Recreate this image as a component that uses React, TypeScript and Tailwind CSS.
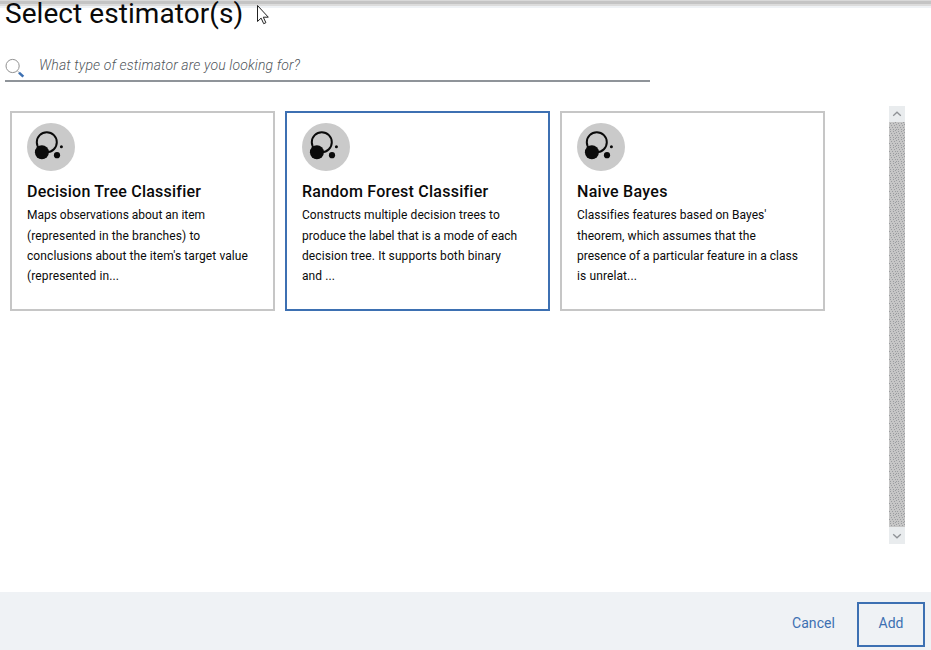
type Line = { text: string; spacing: string };
type Estimator = { title: Line; lines: Line[]; selected?: boolean };

const estimators: Estimator[] = [
  {
    title: { text: "Decision Tree Classifier", spacing: "tracking-[0.22px]" },
    lines: [
      { text: "Maps observations about an item", spacing: "tracking-[-0.01px]" },
      { text: "(represented in the branches) to", spacing: "tracking-[0.1px]" },
      { text: "conclusions about the item's target value", spacing: "tracking-[0.09px]" },
      { text: "(represented in...", spacing: "tracking-[0.13px]" },
    ],
  },
  {
    title: { text: "Random Forest Classifier", spacing: "tracking-[0.24px]" },
    lines: [
      { text: "Constructs multiple decision trees to", spacing: "tracking-[0.06px]" },
      { text: "produce the label that is a mode of each", spacing: "tracking-[0.04px]" },
      { text: "decision tree. It supports both binary", spacing: "tracking-[0.1px]" },
      { text: "and ...", spacing: "tracking-[0.09px]" },
    ],
    selected: true,
  },
  {
    title: { text: "Naive Bayes", spacing: "tracking-[0.28px]" },
    lines: [
      { text: "Classifies features based on Bayes'", spacing: "tracking-[0.03px]" },
      { text: "theorem, which assumes that the", spacing: "tracking-[0.07px]" },
      { text: "presence of a particular feature in a class", spacing: "tracking-[0.02px]" },
      { text: "is unrelat...", spacing: "tracking-[0.11px]" },
    ],
  },
];

function ClusterIcon() {
  return (
    <svg viewBox="0 0 48 48" className="size-12 shrink-0">
      <circle cx="24" cy="24" r="24" fill="#cacaca" />
      <circle cx="19.8" cy="19.2" r="10" fill="none" stroke="#0a0a0a" strokeWidth="2" />
      <circle cx="14.9" cy="29.2" r="7" fill="#0a0a0a" />
      <circle cx="30" cy="32.2" r="3.1" fill="#0a0a0a" />
      <circle cx="34.4" cy="23.8" r="1.5" fill="#0a0a0a" />
    </svg>
  );
}

function Card({ title, lines, selected }: Estimator) {
  return (
    <div
      className={`flex h-[200px] w-[265px] flex-col border-2 px-[15px] pt-2.5 ${
        selected ? "border-[#3d70b2]" : "border-[#c6c6c6]"
      }`}
    >
      <ClusterIcon />
      <h2 className={`mt-2.5 text-base leading-[21px] font-medium whitespace-nowrap ${title.spacing}`}>
        {title.text}
      </h2>
      <p className="mt-[3px] text-xs leading-5 whitespace-nowrap">
        {lines.map((line) => (
          <span key={line.text} className={`block first:mb-px ${line.spacing}`}>
            {line.text}
          </span>
        ))}
      </p>
    </div>
  );
}

function ScrollBar() {
  return (
    <div className="mt-6 flex h-[438px] w-4 flex-col">
      <div className="flex h-4 items-center justify-center bg-[#e9ecee]">
        <svg viewBox="0 0 16 16" className="size-4" fill="none" stroke="#8f9296" strokeWidth="1.3">
          <path d="M4.2 9.8 8 6.2l3.8 3.6" />
        </svg>
      </div>
      <svg className="h-[405px] w-4" shapeRendering="crispEdges">
        <defs>
          <pattern id="grain" width="8" height="8" patternUnits="userSpaceOnUse">
            <rect width="8" height="8" fill="#c6c6c6" />
            <path
              d="M1 1h1v1h-1zM4 1h1v1h-1zM6 0h1v1h-1zM2 3h1v1h-1zM5 3h1v1h-1zM7 2h1v1h-1zM0 5h1v1h-1zM3 5h1v1h-1zM6 5h1v1h-1zM1 7h1v1h-1zM4 7h1v1h-1zM7 7h1v1h-1z"
              fill="#9b9da0"
            />
          </pattern>
        </defs>
        <rect width="16" height="405" fill="url(#grain)" />
      </svg>
      <div className="flex h-[17px] items-center justify-center bg-[#e9ecee]">
        <svg viewBox="0 0 16 16" className="size-4" fill="none" stroke="#8f9296" strokeWidth="1.3">
          <path d="M4.2 6.2 8 9.8l3.8-3.6" />
        </svg>
      </div>
    </div>
  );
}

export default function App() {
  return (
    <div className="relative flex h-[650px] w-[931px] flex-col overflow-hidden bg-white font-['Roboto','Liberation_Sans',sans-serif] text-[#0a0a0a]">
      <div className="absolute inset-x-0 top-0 flex flex-col">
        <div className="h-px bg-[#d9d9d9]" />
        <div className="h-[3px] bg-[#c4c4c4]" />
        <div className="h-0.5 bg-[#dcdcdc]" />
        <div className="h-0.5 bg-[#eff2f5]" />
      </div>
      <header className="relative flex h-[50px] items-start pl-[5px]">
        <h1 className="w-[237px] text-[28px] leading-7 tracking-[0.06px] whitespace-nowrap">Select estimator(s)</h1>
        <svg viewBox="0 0 14 21" className="mt-1 ml-3.5 h-[21px] w-3.5" fill="#fff" stroke="#222" strokeWidth="1">
          <path d="M1.5 1.5v16l3.6-3.4 2.6 5.6 2.2-1-2.6-5.5h5z" />
        </svg>
      </header>
      <div className="ml-[5px] flex h-8 w-[645px] border-b-2 border-[#8f9499]">
        <svg viewBox="0 0 20 20" className="mt-2 size-5" fill="none">
          <circle cx="7.6" cy="8" r="6.6" stroke="#929292" strokeWidth="1" />
          <path d="m12.4 13 1.6 1.4" stroke="#aaa" strokeWidth="1" />
          <path d="m14 14.6 4.3 4" stroke="#3d70b2" strokeWidth="2.6" />
        </svg>
        <span className="mt-1.5 ml-3.5 text-sm leading-[19px] font-light tracking-[0.13px] whitespace-nowrap text-[#50565b] italic">
          What type of estimator are you looking for?
        </span>
      </div>
      <main className="flex flex-1 justify-between pr-[26px] pl-2.5">
        <div className="mt-[29px] flex gap-2.5">
          {estimators.map((estimator) => (
            <Card key={estimator.title.text} {...estimator} />
          ))}
        </div>
        <ScrollBar />
      </main>
      <footer className="flex h-[58px] items-start justify-end bg-[#eff2f5] pt-2.5 pr-1.5 text-sm text-[#3d70b2]">
        <button className="h-[42px] w-[87px] tracking-[0.06px]">Cancel</button>
        <button className="h-[45px] w-[68px] border-2 border-[#3d70b2] pb-[3px]">Add</button>
      </footer>
    </div>
  );
}
